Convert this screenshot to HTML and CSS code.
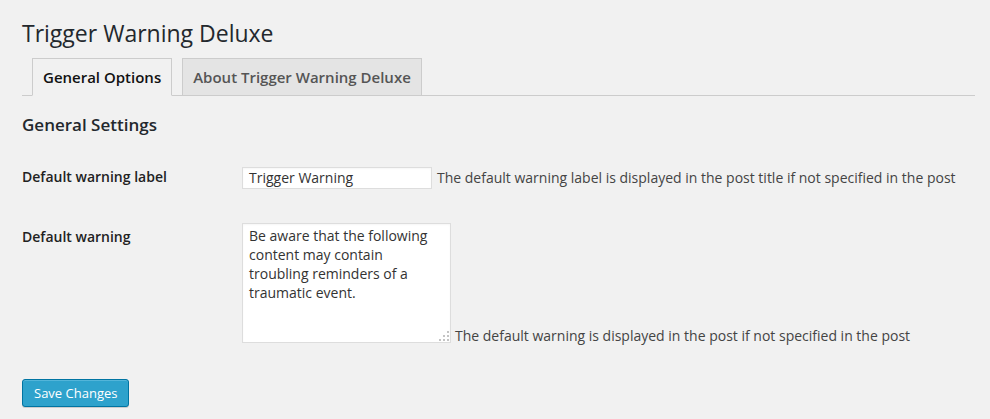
FILE: index.html
```html
<!DOCTYPE html>
<html>
<head>
<meta charset="utf-8">
<link rel="stylesheet" href="styles.css">
</head>
<body>
<div class="wrap">
  <h1 class="page-title">Trigger Warning Deluxe</h1>
  <nav class="tabs">
    <a class="tab tab-active">General Options</a>
    <a class="tab">About Trigger Warning Deluxe</a>
  </nav>
  <h3 class="section-title">General Settings</h3>
  <div class="form">
    <div class="row">
      <div class="label label-first">Default warning label</div>
      <div class="field">
        <span class="input">Trigger Warning</span>
        <span class="desc">The default warning label is displayed in the post title if not specified in the post</span>
      </div>
    </div>
    <div class="row">
      <div class="label">Default warning</div>
      <div class="field field-bottom">
        <div class="textarea">Be aware that the following content may contain troubling reminders of a traumatic event.
          <svg class="grip" width="12" height="12" viewBox="0 0 12 12"><g fill="#c4c4c4"><rect x="9" y="1" width="2" height="2"/><rect x="5" y="5" width="2" height="2"/><rect x="9" y="5" width="2" height="2"/><rect x="1" y="9" width="2" height="2"/><rect x="5" y="9" width="2" height="2"/><rect x="9" y="9" width="2" height="2"/></g></svg>
        </div>
        <span class="desc">The default warning is displayed in the post if not specified in the post</span>
      </div>
    </div>
  </div>
  <div class="submit">
    <span class="button">Save Changes</span>
  </div>
</div>
</body>
</html>
```
FILE: styles.css
```css
html, body {
  margin: 0;
  padding: 0;
  background: #f1f1f1;
}
body {
  font-family: "Open Sans", "Liberation Sans", sans-serif;
  color: #444;
  font-size: 14px;
}
.wrap {
  margin: 10px 15px 0 22px;
}
.page-title {
  margin: 0;
  padding: 9px 0 4px 0;
  font-size: 23px;
  line-height: 29px;
  font-weight: 400;
  color: #23282d;
}
.tabs {
  display: flex;
  gap: 10px;
  padding: 6px 0 0 10px;
  border-bottom: 1px solid #ccc;
}
.tab {
  display: block;
  border: 1px solid #ccc;
  padding: 6px 10px;
  font-size: 15px;
  line-height: 24px;
  font-weight: 600;
  background: #e4e4e4;
  color: #555;
  margin-bottom: -1px;
}
.tab-active {
  background: #f1f1f1;
  color: #111;
  border-bottom-color: #f1f1f1;
}
.section-title {
  margin: 18px 0 0 0;
  font-size: 17px;
  line-height: 22px;
  font-weight: 600;
  color: #23282d;
}
.form {
  margin-top: 12px;
}
.row {
  display: flex;
}
.label {
  width: 200px;
  padding: 20px 10px 20px 0;
  line-height: 1.3;
  font-weight: 600;
  color: #222;
  flex: none;
}
.label-first {
  padding-bottom: 22px;
}
.field {
  padding: 15px 10px;
  display: flex;
  align-items: center;
  gap: 5px;
}
.field-bottom {
  align-items: flex-end;
  gap: 4px;
}
.input {
  display: block;
  box-sizing: border-box;
  width: 190px;
  height: 22px;
  border: 1px solid #ddd;
  background: #fff;
  padding: 0 6px;
  line-height: 20px;
  color: #333;
  box-shadow: inset 0 1px 2px rgba(0,0,0,.04);
}
.textarea {
  position: relative;
  box-sizing: border-box;
  width: 209px;
  height: 120px;
  border: 1px solid #ddd;
  background: #fff;
  padding: 2px 6px;
  line-height: 19px;
  color: #333;
  box-shadow: inset 0 1px 2px rgba(0,0,0,.04);
}
.grip {
  position: absolute;
  right: 0;
  bottom: 0;
}
.desc {
  color: #444;
  line-height: 18px;
}
.field-bottom .desc {
  margin-bottom: -2px;
}
.submit {
  padding: 21px 0 18px;
}
.button {
  display: inline-block;
  box-sizing: border-box;
  height: 28px;
  line-height: 26px;
  padding: 0 11px 1px;
  font-size: 13px;
  color: #fff;
  background: #2ea2cc;
  border: 1px solid #0074a2;
  border-radius: 3px;
  box-shadow: inset 0 1px 0 rgba(120,200,230,.5), 0 1px 0 rgba(0,0,0,.15);
}
```
